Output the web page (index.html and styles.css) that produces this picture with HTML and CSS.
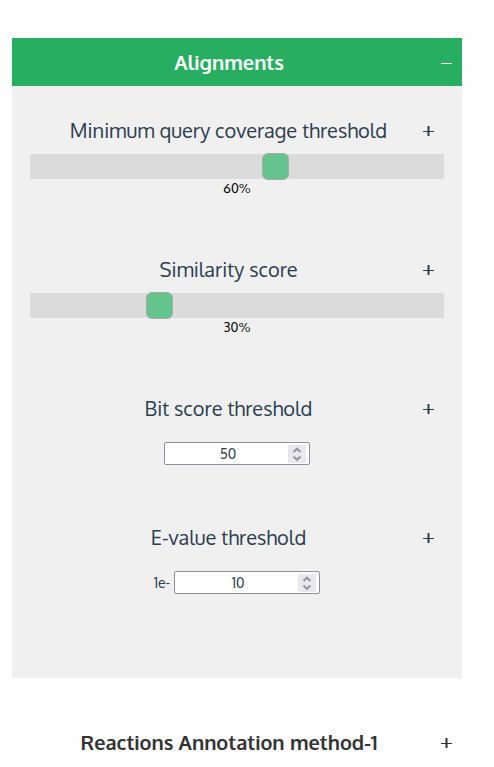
FILE: index.html
```html
<!DOCTYPE html>
<html lang="en">
<head>
<meta charset="utf-8">
<meta name="viewport" content="width=device-width, initial-scale=1">
<title>Alignments</title>
<link rel="stylesheet" href="styles.css">
</head>
<body>
<main class="accordion">
  <button class="section-head active" type="button" aria-expanded="true">
    <span class="title">Alignments</span>
    <svg class="icon" viewBox="0 0 11 11" aria-hidden="true"><path d="M0 5.5H11"/></svg>
  </button>
  <section class="panel">
    <div class="setting">
      <div class="setting-head">
        <label class="title" for="coverage">Minimum query coverage threshold</label>
        <button class="more" type="button"><svg class="icon" viewBox="0 0 11 11" aria-hidden="true"><path d="M0 5.5H11"/><path class="stem" d="M5.5 0V10"/></svg></button>
      </div>
      <input class="slider" id="coverage" type="range" min="0" max="100" value="60">
      <output class="value" for="coverage">60%</output>
    </div>
    <div class="setting">
      <div class="setting-head">
        <label class="title" for="similarity">Similarity score</label>
        <button class="more" type="button"><svg class="icon" viewBox="0 0 11 11" aria-hidden="true"><path d="M0 5.5H11"/><path class="stem" d="M5.5 0V10"/></svg></button>
      </div>
      <input class="slider" id="similarity" type="range" min="0" max="100" value="30">
      <output class="value" for="similarity">30%</output>
    </div>
    <div class="setting">
      <div class="setting-head">
        <label class="title" for="bitscore">Bit score threshold</label>
        <button class="more" type="button"><svg class="icon" viewBox="0 0 11 11" aria-hidden="true"><path d="M0 5.5H11"/><path class="stem" d="M5.5 0V10"/></svg></button>
      </div>
      <div class="number-row">
        <div class="number">
          <input id="bitscore" type="number" value="50">
          <svg class="spinner" viewBox="0 0 18 18" aria-hidden="true"><path d="M5.5 7L9 3.7L12.5 7M5.5 11.5L9 14.8L12.5 11.5"/></svg>
        </div>
      </div>
    </div>
    <div class="setting">
      <div class="setting-head">
        <label class="title" for="evalue">E-value threshold</label>
        <button class="more" type="button"><svg class="icon" viewBox="0 0 11 11" aria-hidden="true"><path d="M0 5.5H11"/><path class="stem" d="M5.5 0V10"/></svg></button>
      </div>
      <div class="number-row">
        <span>1e-</span>
        <div class="number">
          <input id="evalue" type="number" value="10">
          <svg class="spinner" viewBox="0 0 18 18" aria-hidden="true"><path d="M5.5 7L9 3.7L12.5 7M5.5 11.5L9 14.8L12.5 11.5"/></svg>
        </div>
      </div>
    </div>
  </section>
  <button class="section-head" type="button" aria-expanded="false">
    <span class="title">Reactions Annotation method-1</span>
    <svg class="icon" viewBox="0 0 11 11" aria-hidden="true"><path d="M0 5.5H11"/><path class="stem" d="M5.5 0V10"/></svg>
  </button>
</main>
</body>
</html>
```
FILE: styles.css
```css
* {
  box-sizing: border-box;
}

body {
  margin: 0;
  background: #fefdff;
  color: #2c3e50;
  font-family: Oxygen, "Noto Sans", "Open Sans", sans-serif;
  font-size: 14px;
  overflow: hidden;
}

.accordion {
  display: flex;
  flex-direction: column;
  padding: 38px 32px 0 12px;
}

button {
  margin: 0;
  padding: 0;
  border: 0;
  background: none;
  color: inherit;
  font-family: inherit;
  cursor: pointer;
}

.section-head,
.setting-head {
  display: flex;
  align-items: center;
  width: 100%;
  height: 48px;
  font-size: 20px;
  line-height: 24px;
}

.section-head {
  padding: 0 10px 0 5px;
  color: #333;
  font-weight: 600;
}

.section-head.active {
  background: #27ae60;
  color: #fff;
}

.setting-head {
  padding: 0 10px 0 4px;
}

.title {
  flex: 1;
  text-align: center;
  white-space: nowrap;
}

.more {
  display: flex;
}

.icon {
  flex: none;
  width: 11px;
  height: 11px;
  margin-top: 3px;
  fill: none;
  stroke: currentColor;
  stroke-width: 1;
}

.stem {
  stroke-width: 2;
}

.panel {
  display: flex;
  flex-direction: column;
  gap: 48px;
  margin-bottom: 40px;
  padding: 20px 18px 84px;
  background: #f0f0f0;
}

.slider {
  display: block;
  appearance: none;
  width: 100%;
  height: 25px;
  margin: 0;
  background: #dbdbdb;
}

.slider::-webkit-slider-runnable-track {
  height: 25px;
}

.slider::-webkit-slider-thumb {
  appearance: none;
  width: 27px;
  height: 27px;
  margin-top: -1px;
  border: 1px solid #aaa;
  border-radius: 6px;
  background: #65c48e;
}

.value {
  display: block;
  color: #000;
  font-size: 13px;
  line-height: 18px;
  text-align: center;
}

.number-row {
  display: flex;
  align-items: center;
  justify-content: center;
  gap: 4px;
  padding-top: 10px;
}

.number {
  position: relative;
  width: 146px;
}

.number input {
  display: block;
  appearance: textfield;
  width: 100%;
  height: 23px;
  margin: 0;
  padding: 0 18px 0 0;
  border: 1px solid #8f8f9d;
  border-radius: 2px;
  background: #fff;
  color: inherit;
  font: inherit;
  text-align: center;
}

.number input::-webkit-inner-spin-button {
  appearance: none;
  margin: 0;
}

.spinner {
  position: absolute;
  top: 3px;
  right: 4px;
  width: 18px;
  height: 18px;
  background: #e9e9ed;
  fill: none;
  stroke: #9595a0;
  stroke-width: 2;
  pointer-events: none;
}
```
